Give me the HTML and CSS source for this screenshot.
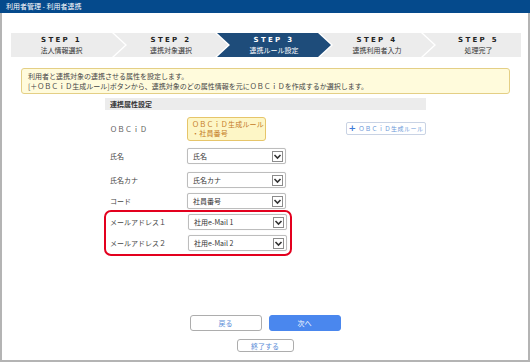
FILE: index.html
```html
<!DOCTYPE html>
<html lang="ja">
<head>
  <meta charset="UTF-8">
  <title>利用者管理 - 利用者連携</title>
  <link rel="stylesheet" href="styles.css">
</head>
<body>
  <div class="titlebar">利用者管理 - 利用者連携</div>
  <div class="frame">
    <div class="steps">
      <div class="step first"><b>STEP 1</b><span>法人情報選択</span></div>
      <div class="step"><b>STEP 2</b><span>連携対象選択</span></div>
      <div class="step active"><b>STEP 3</b><span>連携ルール設定</span></div>
      <div class="step"><b>STEP 4</b><span>連携利用者入力</span></div>
      <div class="step last"><b>STEP 5</b><span>処理完了</span></div>
    </div>

    <div class="info">
      利用者と連携対象の連携させる属性を設定します。<br>
      [＋ＯＢＣｉＤ生成ルール]ボタンから、連携対象のどの属性情報を元にＯＢＣｉＤを作成するか選択します。
    </div>

    <div class="form">
      <div class="form-head">連携属性設定</div>

      <div class="row row-obcid">
        <div class="label wide">ＯＢＣｉＤ</div>
        <div class="rule">ＯＢＣｉＤ生成ルール<br>・社員番号</div>
        <button class="btn-add"><span class="plus">+</span> ＯＢＣｉＤ生成ルール</button>
      </div>

      <div class="row r1">
        <div class="label">氏名</div>
        <div class="select"><span>氏名</span><svg width="11" height="11" viewBox="0 0 11 11"><rect x="0.5" y="0.5" width="10" height="10" fill="#fff" stroke="#8c8c8c"/><polyline points="2.5,4 5.5,7 8.5,4" fill="none" stroke="#333" stroke-width="1.6"/></svg></div>
      </div>
      <div class="row r2">
        <div class="label">氏名カナ</div>
        <div class="select"><span>氏名カナ</span><svg width="11" height="11" viewBox="0 0 11 11"><rect x="0.5" y="0.5" width="10" height="10" fill="#fff" stroke="#8c8c8c"/><polyline points="2.5,4 5.5,7 8.5,4" fill="none" stroke="#333" stroke-width="1.6"/></svg></div>
      </div>
      <div class="row r3">
        <div class="label">コード</div>
        <div class="select"><span>社員番号</span><svg width="11" height="11" viewBox="0 0 11 11"><rect x="0.5" y="0.5" width="10" height="10" fill="#fff" stroke="#8c8c8c"/><polyline points="2.5,4 5.5,7 8.5,4" fill="none" stroke="#333" stroke-width="1.6"/></svg></div>
      </div>

      <div class="highlight">
        <div class="row">
          <div class="label">メールアドレス１</div>
          <div class="select"><span>社用e-Mail 1</span><svg width="11" height="11" viewBox="0 0 11 11"><rect x="0.5" y="0.5" width="10" height="10" fill="#fff" stroke="#8c8c8c"/><polyline points="2.5,4 5.5,7 8.5,4" fill="none" stroke="#333" stroke-width="1.6"/></svg></div>
        </div>
        <div class="row r5">
          <div class="label">メールアドレス２</div>
          <div class="select"><span>社用e-Mail 2</span><svg width="11" height="11" viewBox="0 0 11 11"><rect x="0.5" y="0.5" width="10" height="10" fill="#fff" stroke="#8c8c8c"/><polyline points="2.5,4 5.5,7 8.5,4" fill="none" stroke="#333" stroke-width="1.6"/></svg></div>
        </div>
      </div>
    </div>

    <div class="footer">
      <div class="btn-row">
        <button class="btn">戻る</button>
        <button class="btn primary">次へ</button>
      </div>
      <button class="btn small">終了する</button>
    </div>
  </div>
</body>
</html>
```

FILE: styles.css
```css
* { box-sizing: border-box; }
body {
  margin: 0;
  width: 530px;
  height: 362px;
  font-family: "Noto Sans CJK JP", "Noto Sans", sans-serif;
  font-size: 7px;
  color: #333;
  background: #fff;
  overflow: hidden;
}

.titlebar {
  height: 13px;
  line-height: 13px;
  background: #054a8c;
  color: #fff;
  padding-left: 6px;
  font-size: 7px;
}

.frame {
  height: 349px;
  border: 2px solid #b4b4b4;
  border-top: none;
  display: flex;
  flex-direction: column;
  padding-bottom: 8px;
}

/* ステップ表示 */
.steps {
  display: flex;
  height: 24px;
  margin: 20px 7px 0 9px;
}
.step {
  width: 114px;
  margin-right: -11px;
  background: #ececec;
  display: flex;
  flex-direction: column;
  align-items: center;
  justify-content: center;
  padding: 0 13px;
  clip-path: polygon(0 0, calc(100% - 13px) 0, 100% 50%, calc(100% - 13px) 100%, 0 100%, 13px 50%);
}
.step.first {
  clip-path: polygon(0 0, calc(100% - 13px) 0, 100% 50%, calc(100% - 13px) 100%, 0 100%);
  padding-left: 0;
}
.step.last {
  flex: 1;
  margin-right: 0;
  padding-right: 0;
  clip-path: polygon(0 0, 100% 0, 100% 100%, 0 100%, 13px 50%);
}
.step b {
  font-family: "DejaVu Sans", sans-serif;
  font-size: 7px;
  letter-spacing: 2.3px;
  color: #222;
  line-height: 10px;
}
.step span {
  font-size: 7px;
  line-height: 11px;
  color: #333;
}
.step.active { background: #1e4c7a; }
.step.active b, .step.active span { color: #fff; }

/* 説明 */
.info {
  margin: 11px 18px 0 19px;
  height: 26px;
  background: #fffbdc;
  border: 1px solid #e4cf85;
  border-radius: 3px;
  padding: 2px 6px;
  line-height: 10px;
  font-size: 7px;
  color: #444;
}

/* 設定フォーム */
.form {
  margin: 4px 0 0 103px;
  width: 321px;
}
.form-head {
  height: 12px;
  line-height: 12px;
  background: #ececec;
  padding-left: 5px;
  font-weight: bold;
  color: #333;
}
.row {
  display: flex;
  align-items: center;
  height: 16px;
}
.label {
  width: 82px;
  padding-left: 5px;
  color: #444;
}
.label.wide { letter-spacing: 0.5px; color: #555; }
.row-obcid {
  height: 24px;
  margin-top: 7px;
}
.rule {
  width: 79px;
  height: 24px;
  background: #fdf6c6;
  border: 1px solid #e6c56a;
  border-radius: 3px;
  padding: 2px 0 0 4px;
  line-height: 9px;
  color: #c47a25;
  letter-spacing: 0.2px;
}
.btn-add {
  margin-left: 80px;
  width: 80px;
  height: 13px;
  padding: 0;
  background: #fff;
  border: 1px solid #c9d3e4;
  border-radius: 2px;
  font-family: inherit;
  font-size: 6px;
  color: #6b97d8;
  letter-spacing: 0.5px;
  align-self: flex-end;
  margin-bottom: 6px;
}
.btn-add .plus {
  font-family: "DejaVu Sans", sans-serif;
  font-weight: bold;
  font-size: 9px;
  color: #3f7ad8;
  line-height: 8px;
}
.r1 { margin-top: 7px; }
.r2 { margin-top: 8px; }
.r3 { margin-top: 5px; }
.r5 { margin-top: 5px; }

.select {
  width: 99px;
  height: 16px;
  border: 1px solid #bdbdbd;
  border-radius: 2px;
  background: #fff;
  display: flex;
  align-items: center;
  justify-content: space-between;
  padding: 0 2px 0 5px;
  color: #333;
  box-shadow: 0 0 1px rgba(0, 0, 0, 0.15);
}

.highlight {
  margin: 1px 0 0 -1px;
  width: 188px;
  border: 2.5px solid #e3001e;
  border-radius: 7px;
  padding: 2px 0 3px 0;
}
.highlight .label { padding-left: 4px; }

/* ボタン */
.footer {
  margin-top: auto;
  display: flex;
  flex-direction: column;
  align-items: center;
  gap: 8px;
}
.btn-row { display: flex; gap: 7px; }
.btn {
  width: 72px;
  height: 16px;
  padding: 0;
  background: #fff;
  border: 1px solid #adadad;
  border-radius: 3px;
  font-family: inherit;
  font-size: 7px;
  color: #5b8dd8;
}
.btn.primary {
  background: #4a87ee;
  border-color: #4a87ee;
  color: #fff;
}
.btn.small {
  width: 57px;
  height: 13px;
}
```
